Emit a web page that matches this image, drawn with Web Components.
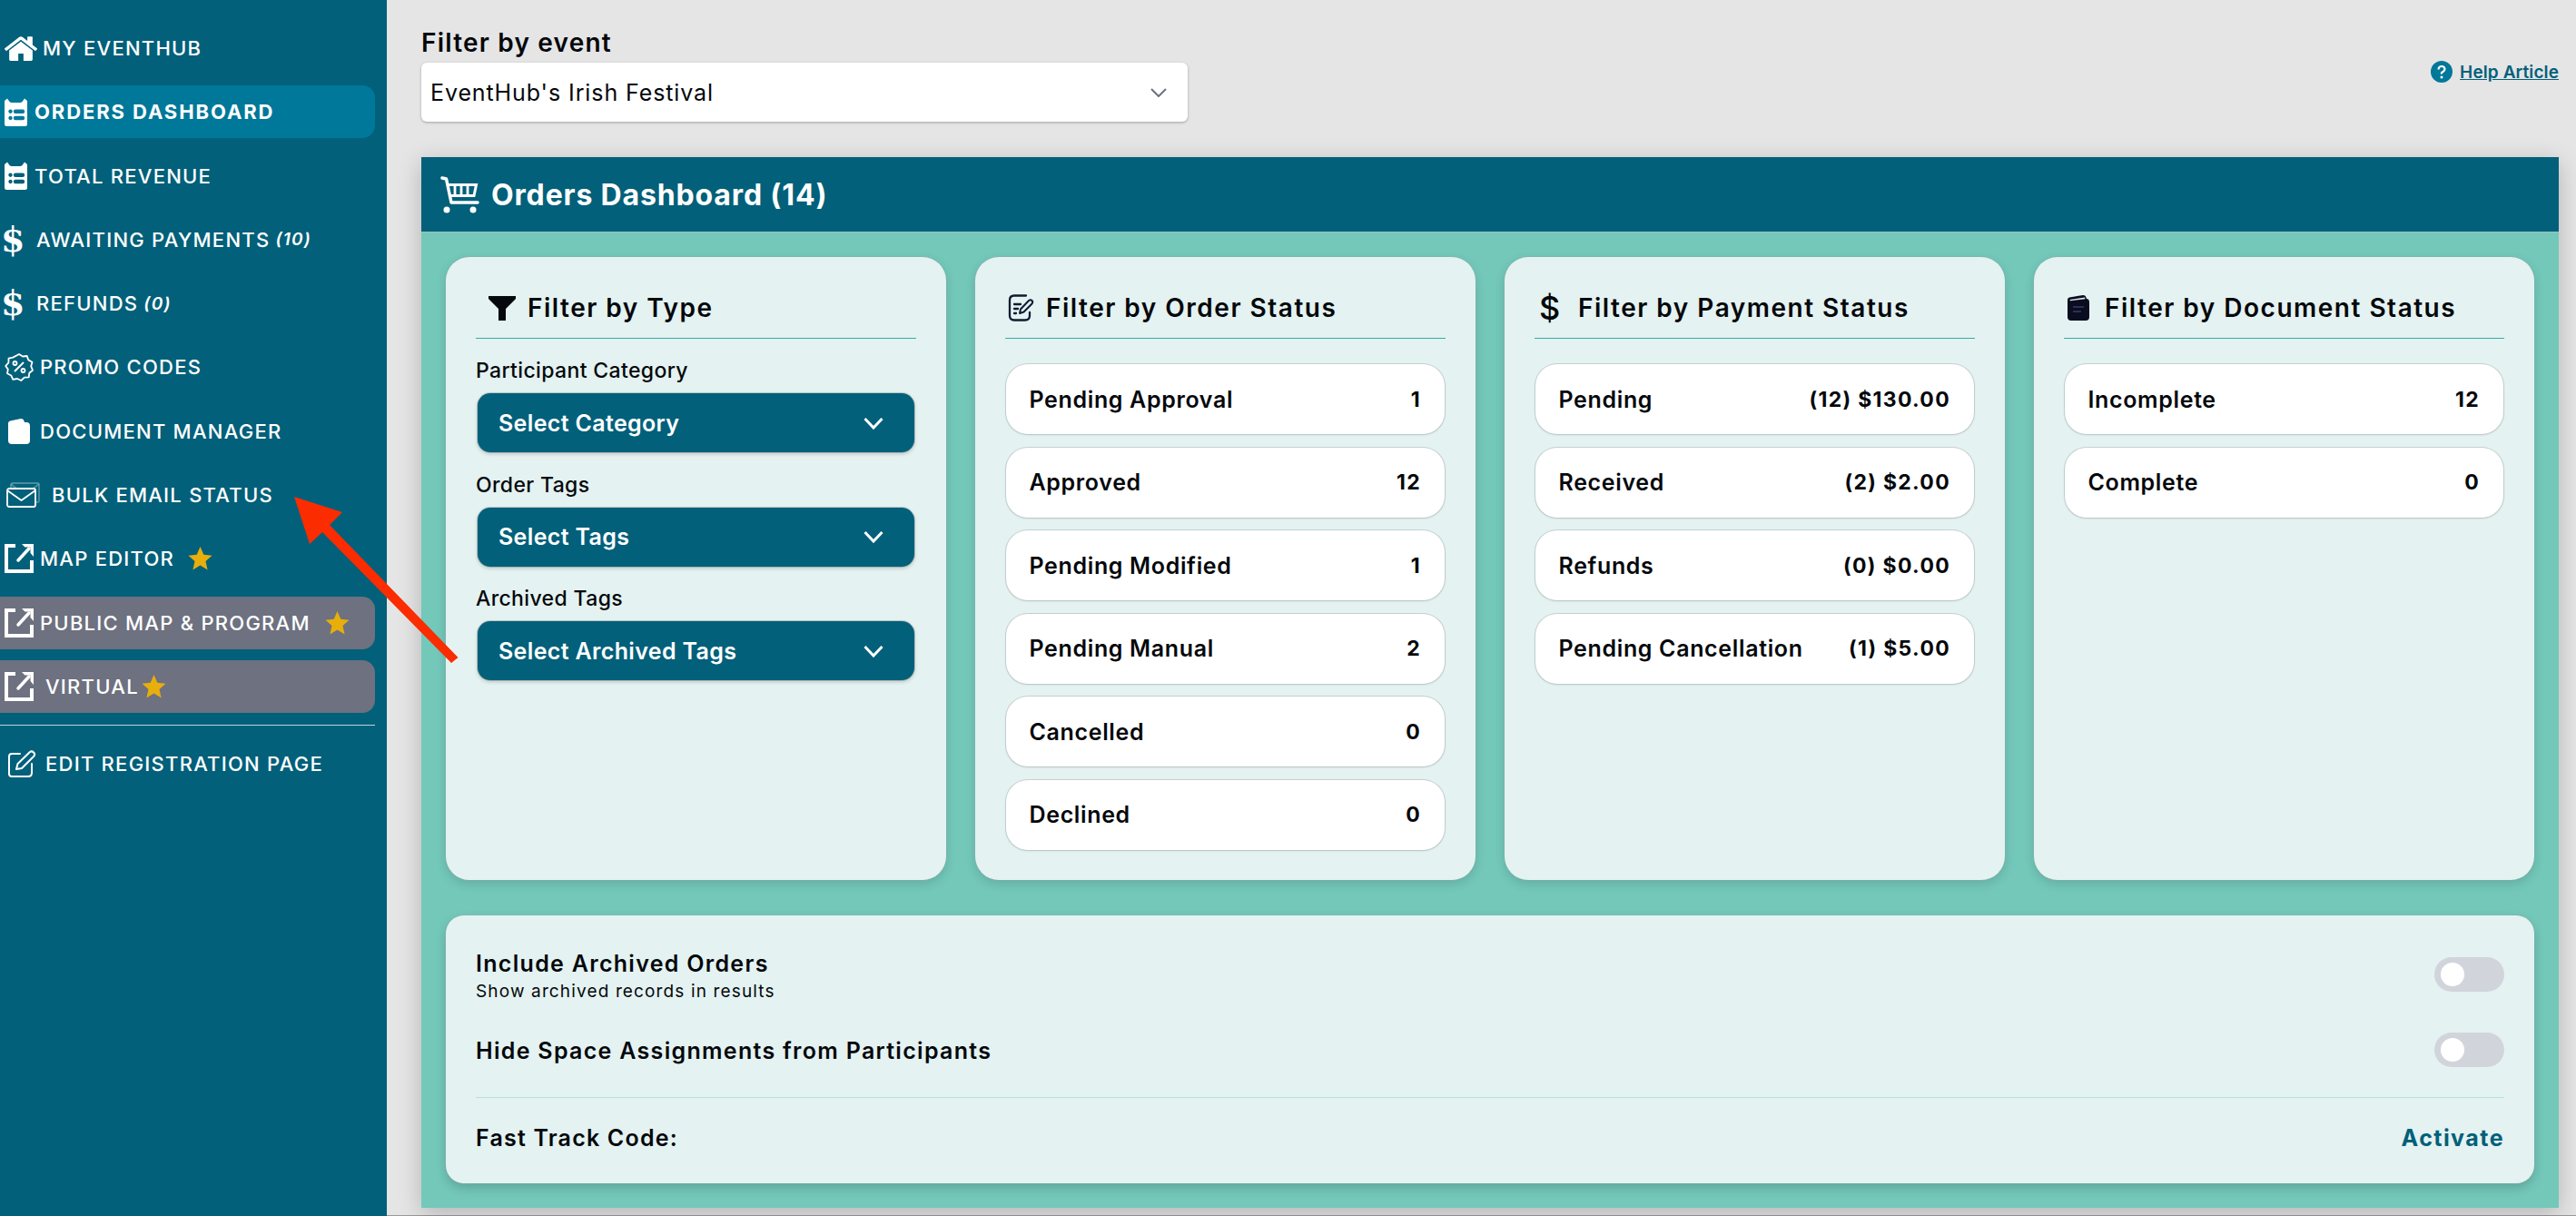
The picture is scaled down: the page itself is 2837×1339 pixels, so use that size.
<!DOCTYPE html>
<html>
<head>
<meta charset="utf-8">
<title>Orders Dashboard</title>
<style>
    html, body { margin: 0; height: 100%; overflow: hidden; }
    body { font-family: 'Inter', 'Liberation Sans', sans-serif; color: #05080c; background: #e5e5e5; }
</style>
</head>
<body>

<app-shell>
    <side-nav slot="nav">
        <nav-item icon="home" icon-x="5" text-x="47">MY EVENTHUB</nav-item>
        <nav-item icon="orders" icon-x="5" text-x="38" state="active">ORDERS DASHBOARD</nav-item>
        <nav-item icon="orders" icon-x="5" text-x="38">TOTAL REVENUE</nav-item>
        <nav-item icon="dollar" icon-x="1" text-x="40">AWAITING PAYMENTS <em>&nbsp;(10)</em></nav-item>
        <nav-item icon="dollar" icon-x="1" text-x="40">REFUNDS <em>&nbsp;(0)</em></nav-item>
        <nav-item icon="promo" icon-x="5" text-x="44">PROMO CODES</nav-item>
        <nav-item icon="book" icon-x="9" text-x="44">DOCUMENT MANAGER</nav-item>
        <nav-item icon="mail" icon-x="7" text-x="57">BULK EMAIL STATUS</nav-item>
        <nav-item icon="external" icon-x="5" text-x="44" star="15">MAP EDITOR</nav-item>
        <nav-item icon="external" icon-x="5" text-x="44" star="16" state="muted">PUBLIC MAP &amp; PROGRAM</nav-item>
        <nav-item icon="external" icon-x="5" text-x="50" star="3" state="muted">VIRTUAL</nav-item>
        <nav-item icon="edit" icon-x="9" text-x="50" divided>EDIT REGISTRATION PAGE</nav-item>
    </side-nav>

    <event-filter label="Filter by event" value="EventHub's Irish Festival"></event-filter>
    <help-link slot="help">Help Article</help-link>

    <orders-panel heading="Orders Dashboard (14)">
        <filter-card heading="Filter by Type" icon="funnel" icon-x="14" text-x="57" top="21" gap="21.5">
            <tag-select label="Participant Category" value="Select Category"></tag-select>
            <tag-select label="Order Tags" value="Select Tags"></tag-select>
            <tag-select label="Archived Tags" value="Select Archived Tags"></tag-select>
        </filter-card>
        <filter-card heading="Filter by Order Status" icon="note" icon-x="3" text-x="45">
            <status-row value="1">Pending Approval</status-row>
            <status-row value="12">Approved</status-row>
            <status-row value="1">Pending Modified</status-row>
            <status-row value="2">Pending Manual</status-row>
            <status-row value="0">Cancelled</status-row>
            <status-row value="0">Declined</status-row>
        </filter-card>
        <filter-card heading="Filter by Payment Status" icon="dollar" icon-x="5" text-x="48">
            <status-row value="(12) $130.00">Pending</status-row>
            <status-row value="(2) $2.00">Received</status-row>
            <status-row value="(0) $0.00">Refunds</status-row>
            <status-row value="(1) $5.00">Pending Cancellation</status-row>
        </filter-card>
        <filter-card heading="Filter by Document Status" icon="darkbook" icon-x="4" text-x="45">
            <status-row value="12">Incomplete</status-row>
            <status-row value="0">Complete</status-row>
        </filter-card>

        <settings-card slot="footer">
            <toggle-row hint="Show archived records in results">Include Archived Orders</toggle-row>
            <toggle-row>Hide Space Assignments from Participants</toggle-row>
            <span slot="code">Fast Track Code:</span>
            <span slot="action">Activate</span>
        </settings-card>
    </orders-panel>

    <red-arrow slot="overlay"></red-arrow>
</app-shell>

<script>
const ICONS = {
    home: `<svg width="36" height="28" viewBox="90 190 1612 1350" preserveAspectRatio="none" fill="#fff"><path d="M1472 992v480q0 26-19 45t-45 19h-384v-384h-256v384h-384q-26 0-45-19t-19-45v-480q0-1 .5-3t.5-3l575-474 575 474q1 2 1 6zm223-69l-62 74q-8 9-21 11h-3q-13 0-21-7l-692-577-692 577q-12 8-24 7-13-2-21-11l-62-74q-8-10-7-23.500t11-21.500l719-599q32-26 76-26t76 26l244 204v-195q0-14 9-23t23-9h192q14 0 23 9t9 23v408l219 182q10 8 11 21.500t-7 23.500z"/></svg>`,
    orders: `<svg width="25" height="31" viewBox="0 0 25 31"><path fill="#fff" fill-rule="evenodd" d="M0 3 L3 0.500 L5.500 4 Q6.500 5 8 5 H17 Q18.500 5 19.500 4 L22 0.500 L25 3 V28.500 Q25 31 22.500 31 H2.500 Q0 31 0 28.500 Z M6.500 12.500 a2.200 2.200 0 1 0 .01 0 Z M6.500 19.800 a2.200 2.200 0 1 0 .01 0 Z M12 12.500 a2 2 0 0 0 0 4.400 H20 a2 2 0 0 0 0 -4.400 Z M12 19.800 a2 2 0 0 0 0 4.400 H20 a2 2 0 0 0 0 -4.400 Z"/></svg>`,
    dollar: `<span class="glyph">$</span>`,
    promo: `<svg width="32" height="32" viewBox="0 0 32 32" fill="none" stroke="#fff" stroke-width="1.800" stroke-linejoin="round"><path d="M16 2l4 2.500 4.700-.5 1.600 4.400 4.200 2.300-1.300 4.600 1.800 4.400-3.700 3-.6 4.700-4.800.3L18.300 31 14 29l-4.700.8-2-4.300-4.300-2.200.8-4.700L1.200 15l3.200-3.600.1-4.800 4.700-1z"/><path d="M11 21L21 11" stroke-width="2"/><circle cx="11.500" cy="12" r="2"/><circle cx="20.500" cy="20" r="2"/></svg>`,
    book: `<svg width="24" height="28" viewBox="0 0 24 28"><path fill="#fff" d="M0 5 Q0 3 2 2.500 L14 0 Q17 -.3 17.500 2.500 L18 4 H20 Q24 4 24 8 V24 Q24 28 20 28 H4 Q0 28 0 24 Z"/></svg>`,
    mail: `<svg width="37" height="28" viewBox="0 0 37 28" fill="none"><g stroke="#fff" stroke-opacity=".28" stroke-width="1.800"><rect x="5" y="1" width="31" height="21" rx="2"/><path d="M5 2l15 12 16-12"/></g><g stroke="#fff" stroke-width="1.800" stroke-linejoin="round"><rect x="1" y="7" width="31" height="20" rx="2" fill="#02607a"/><path d="M1 9l15.500 11L32 9"/></g></svg>`,
    external: `<svg width="32" height="32" viewBox="0 0 32 32" fill="none" stroke="#fff"><path stroke-width="4" d="M12 2H2V30H30V18"/><path stroke-width="3.500" stroke-linecap="round" d="M15 18L27 5"/><path fill="#fff" stroke="none" d="M19 0H32V14L28.500 10V3.500H22.500Z"/></svg>`,
    edit: `<svg width="30" height="30" viewBox="0 0 30 30" fill="none" stroke="#fff" stroke-width="2" stroke-linejoin="round" stroke-linecap="round"><path d="M13 4H4Q1 4 1 7V26Q1 29 4 29H22Q26 29 26 25V15"/><path d="M9 21l1.500-6L24 2q2-1.500 4 .5t.5 4L15 20z"/></svg>`,
    funnel: `<svg width="30" height="27" viewBox="0 0 30 27" fill="#05080c"><path d="M0 0H30V3L19 14V27H11V14L0 3Z"/></svg>`,
    note: `<svg width="28" height="30" viewBox="0 0 28 30" fill="none" stroke="#101a33" stroke-width="2.300" stroke-linecap="round" stroke-linejoin="round"><path d="M20 1.500H7Q2 1.500 2 6.500V23.500Q2 28.500 7 28.500H19Q24 28.500 24 23.500V20"/><path d="M7 11H14M7 16H11M7 21H9"/><path d="M13 21l1-4.500 9-9.500q2-1.500 3.500 0t0 3.500l-9 9z" stroke-width="2"/></svg>`,
    darkbook: `<svg width="24" height="28" viewBox="0 0 24 28"><path fill="#0a0d1f" d="M0 5 Q0 3 2 2.500 L17 0 Q20 -.3 20.500 2.500 L21 4 Q24 4 24 8 V24 Q24 28 20 28 H4 Q0 28 0 24 Z"/><path fill="#dfe4f2" d="M2.500 5 L19 2.600 L19.500 4.200 L3 6.300Z"/><path stroke="#2a2f55" stroke-width="1.800" d="M6 13H18M6 18H15"/></svg>`
};

class AppShell extends HTMLElement {
    constructor() {
        super();
        this.shadow = this.attachShadow({ mode: 'open' });
    }

    connectedCallback() {
        this.shadow.innerHTML = `
        <style>
            :host{
                display: flex;
                height: 100vh;
                overflow: hidden;
                position: relative;
            }
            main{
                border-bottom: 1px solid #9a9a9a;
                box-sizing: border-box;
                flex: 1;
                min-width: 0;
                padding: 31px 19px 0 38px;
            }
            .top{
                align-items: flex-start;
                display: flex;
                justify-content: space-between;
                margin-bottom: 39px;
            }
        </style>
        <slot name="nav"></slot>
        <main>
            <div class="top">
                <slot></slot>
                <slot name="help"></slot>
            </div>
            <slot name="panel"></slot>
        </main>
        <slot name="overlay"></slot>`;
        // the panel is moved to its own slot so the default slot only holds the event filter
        let panel = this.querySelector('orders-panel');
        panel.setAttribute('slot', 'panel');
    }
}

class SideNav extends HTMLElement {
    constructor() {
        super();
        this.shadow = this.attachShadow({ mode: 'open' });
    }

    connectedCallback() {
        this.shadow.innerHTML = `
        <style>
            :host{
                background: #02607a;
                box-sizing: border-box;
                display: flex;
                flex: 0 0 426px;
                flex-direction: column;
                gap: 12.3px;
                height: 100%;
                overflow: hidden;
                padding: 24px 13px 0 0;
            }
        </style>
        <slot></slot>`;
    }
}

class NavItem extends HTMLElement {
    constructor() {
        super();
        this.shadow = this.attachShadow({ mode: 'open' });
    }

    connectedCallback() {
        let iconX = Number(this.getAttribute('icon-x'));
        let textX = Number(this.getAttribute('text-x'));
        let state = this.getAttribute('state');
        let star = this.getAttribute('star');
        let background = state == 'active' ? '#007899' : state == 'muted' ? '#6d7180' : 'transparent';
        let weight = state == 'active' ? 700 : 500;
        let spacing = state == 'active' ? 1.9 : 1.25;

        this.shadow.innerHTML = `
        <style>
            :host{
                display: block;
                margin-left: -14px;
            }
            :host([divided]){
                border-top: 1px solid #b9d6de;
                margin-left: 0;
                margin-top: 0.5px;
                padding-top: 13px;
            }
            .item{
                align-items: center;
                background: ${background};
                border-radius: 14px;
                color: #fff;
                display: flex;
                font-size: 22px;
                font-weight: ${weight};
                height: 58px;
                letter-spacing: ${spacing}px;
                padding-left: ${this.hasAttribute('divided') ? 0 : 14}px;
                white-space: nowrap;
            }
            .icon{
                align-items: center;
                box-sizing: border-box;
                display: flex;
                flex: 0 0 ${textX}px;
                padding-left: ${iconX}px;
            }
            .glyph{
                font-family: 'DejaVu Serif', serif;
                font-size: 38px;
                font-weight: 700;
                letter-spacing: 0;
                line-height: 1;
            }
            ::slotted(em){
                font-size: 19px;
                font-weight: 600;
            }
            svg{ display: block; overflow: visible; }
            .star{ margin-left: ${star}px; }
        </style>
        <div class="item">
            <span class="icon">${ICONS[this.getAttribute('icon')]}</span>
            <slot></slot>
            ${star ? `<svg class="star" width="27" height="26" viewBox="0 0 27 26"><path fill="#e8ae0c" d="M13.500 0l3.800 8.800 9.200.9-7 6.200 2.100 9.600-8.100-5.100-8.100 5.100 2.100-9.600-7-6.200 9.200-.9z"/></svg>` : ''}
        </div>`;
    }
}

class EventFilter extends HTMLElement {
    constructor() {
        super();
        this.shadow = this.attachShadow({ mode: 'open' });
    }

    connectedCallback() {
        this.shadow.innerHTML = `
        <style>
            :host{ display: block; width: 844px; }
            label{
                display: block;
                font-size: 28px;
                font-weight: 600;
                letter-spacing: 1.2px;
                line-height: 32px;
                margin-bottom: 6px;
            }
            .box{
                align-items: center;
                background: #fff;
                border-radius: 6px;
                box-shadow: 0 1px 3px rgba(0,0,0,.3);
                box-sizing: border-box;
                display: flex;
                font-size: 25px;
                height: 65px;
                justify-content: space-between;
                letter-spacing: 0.9px;
                padding: 0 23px 0 10px;
            }
        </style>
        <label>${this.getAttribute('label')}</label>
        <div class="box">
            <span>${this.getAttribute('value')}</span>
            <svg width="18" height="10" viewBox="0 0 18 10" fill="none" stroke="#6b7280" stroke-width="2"><path d="M1 1l8 8 8-8"/></svg>
        </div>`;
    }
}

class HelpLink extends HTMLElement {
    constructor() {
        super();
        this.shadow = this.attachShadow({ mode: 'open' });
    }

    connectedCallback() {
        this.shadow.innerHTML = `
        <style>
            :host{
                align-items: center;
                color: #02607a;
                display: flex;
                font-size: 19px;
                font-weight: 600;
                gap: 8px;
                margin-top: 36px;
            }
            a{ color: inherit; letter-spacing: 0.1px; text-decoration: underline; }
            svg{ display: block; }
        </style>
        <svg width="24" height="24" viewBox="0 0 24 24">
            <circle cx="12" cy="12" r="12" fill="#007899"/>
            <path d="M8.500 9.500Q8.800 6 12 6t3.500 3q0 2-2 3t-1.500 2.500" fill="none" stroke="#fff" stroke-width="2.200"/>
            <circle cx="12" cy="18" r="1.500" fill="#fff"/>
        </svg>
        <a><slot></slot></a>`;
    }
}

class OrdersPanel extends HTMLElement {
    constructor() {
        super();
        this.shadow = this.attachShadow({ mode: 'open' });
    }

    connectedCallback() {
        this.shadow.innerHTML = `
        <style>
            :host{
                box-shadow: 0 6px 24px rgba(0,0,0,.22);
                display: block;
            }
            header{
                align-items: center;
                background: #02607a;
                border-bottom: 1px solid #9cc3c4;
                box-sizing: border-box;
                color: #fff;
                display: flex;
                font-size: 32px;
                font-weight: 700;
                gap: 13px;
                height: 83px;
                letter-spacing: 0.85px;
                padding-left: 21px;
            }
            .body{
                background: #73c8ba;
                box-sizing: border-box;
                height: 1074px;
                padding: 27px 27px 0 27px;
            }
            .cards{
                display: grid;
                gap: 32px;
                grid-template-columns: repeat(4, 1fr);
                height: 686px;
                margin-bottom: 39px;
            }
            svg{ display: block; }
        </style>
        <header>
            <svg width="43" height="41" viewBox="0 0 43 41" fill="none" stroke="#fff">
                <path stroke-width="3.500" stroke-linecap="round" stroke-linejoin="round" d="M2 2L6.500 3L12 29H41"/>
                <path stroke-width="3" d="M7 9.500H39.500L37 21.500H10"/>
                <path stroke-width="2.800" d="M16 9.500V21M23 9.500V21M30 9.500V21"/>
                <circle cx="7" cy="37" r="3.500" fill="#fff" stroke="none"/>
                <circle cx="36" cy="37" r="3.500" fill="#fff" stroke="none"/>
            </svg>
            <span>${this.getAttribute('heading')}</span>
        </header>
        <div class="body">
            <div class="cards"><slot></slot></div>
            <slot name="footer"></slot>
        </div>`;
    }
}

class FilterCard extends HTMLElement {
    constructor() {
        super();
        this.shadow = this.attachShadow({ mode: 'open' });
    }

    connectedCallback() {
        let iconX = this.getAttribute('icon-x');
        let textX = this.getAttribute('text-x');
        let top = this.getAttribute('top') || 28;
        let gap = this.getAttribute('gap') || 14.5;

        this.shadow.innerHTML = `
        <style>
            :host{
                background: #e4f2f1;
                border-radius: 26px;
                box-shadow: 0 0 0 1px rgba(150,170,170,.35), 0 4px 12px rgba(0,0,0,.14);
                box-sizing: border-box;
                display: block;
                min-width: 0;
                padding: 33px;
            }
            h2{
                align-items: center;
                border-bottom: 1px solid #2fb0a5;
                display: flex;
                font-size: 28px;
                font-weight: 600;
                height: 46px;
                letter-spacing: 1.5px;
                line-height: 46px;
                margin: 0;
                padding-bottom: 10px;
                white-space: nowrap;
            }
            .icon{
                align-items: center;
                box-sizing: border-box;
                display: flex;
                flex: 0 0 ${textX}px;
                padding-left: ${iconX}px;
            }
            .glyph{ font-size: 36px; font-weight: 500; letter-spacing: 0; line-height: 1; }
            svg{ display: block; overflow: visible; }
            .rows{
                display: flex;
                flex-direction: column;
                gap: ${gap}px;
                margin-top: ${top}px;
            }
        </style>
        <h2><span class="icon">${ICONS[this.getAttribute('icon')]}</span>${this.getAttribute('heading')}</h2>
        <div class="rows"><slot></slot></div>`;
    }
}

class TagSelect extends HTMLElement {
    constructor() {
        super();
        this.shadow = this.attachShadow({ mode: 'open' });
    }

    connectedCallback() {
        this.shadow.innerHTML = `
        <style>
            :host{ display: block; }
            label{
                display: block;
                font-size: 23px;
                font-weight: 500;
                letter-spacing: 0.36px;
                line-height: 28px;
                margin-bottom: 11px;
            }
            .box{
                align-items: center;
                background: #02607a;
                border-radius: 14px;
                box-shadow: 0 0 0 1px rgba(120,130,130,.35), 0 2px 4px rgba(0,0,0,.18);
                box-sizing: border-box;
                color: #fff;
                display: flex;
                font-size: 25px;
                font-weight: 600;
                height: 65px;
                justify-content: space-between;
                letter-spacing: 0.35px;
                margin: 0 2px;
                padding: 0 34px 0 23px;
            }
            svg{ display: block; }
        </style>
        <label>${this.getAttribute('label')}</label>
        <div class="box">
            <span>${this.getAttribute('value')}</span>
            <svg width="22" height="14" viewBox="0 0 22 14" fill="none" stroke="#fff" stroke-width="3"><path d="M1.500 2L11 12 20.500 2"/></svg>
        </div>`;
    }
}

class StatusRow extends HTMLElement {
    constructor() {
        super();
        this.shadow = this.attachShadow({ mode: 'open' });
    }

    connectedCallback() {
        this.shadow.innerHTML = `
        <style>
            :host{
                align-items: center;
                background: #fff;
                border-radius: 24px;
                box-shadow: 0 0 0 1px rgba(150,160,160,.38), 0 1px 3px rgba(0,0,0,.1);
                box-sizing: border-box;
                display: flex;
                font-size: 25px;
                font-weight: 600;
                height: 77px;
                justify-content: space-between;
                letter-spacing: 0.65px;
                margin: 0 1px;
                padding: 0 26px 0 25.5px;
                white-space: nowrap;
            }
            .value{
                font-size: 23px;
                font-weight: 700;
                letter-spacing: 1.3px;
            }
        </style>
        <span><slot></slot></span>
        <span class="value">${this.getAttribute('value')}</span>`;
    }
}

class SettingsCard extends HTMLElement {
    constructor() {
        super();
        this.shadow = this.attachShadow({ mode: 'open' });
    }

    connectedCallback() {
        this.shadow.innerHTML = `
        <style>
            :host{
                background: #e4f2f1;
                border-radius: 20px;
                box-shadow: 0 0 0 1px rgba(150,170,170,.35), 0 5px 12px rgba(0,0,0,.18);
                box-sizing: border-box;
                display: block;
                height: 295px;
                padding: 38px 33px 0;
            }
            .toggles{
                display: flex;
                flex-direction: column;
                gap: 35px;
            }
            .code{
                align-items: center;
                border-top: 1px solid #b5e0d8;
                display: flex;
                font-size: 25px;
                font-weight: 600;
                height: 30px;
                justify-content: space-between;
                letter-spacing: 1.2px;
                margin-top: 32px;
                padding-top: 29px;
            }
            .action{
                color: #02607a;
                font-weight: 700;
                letter-spacing: 1.45px;
            }
        </style>
        <div class="toggles"><slot></slot></div>
        <div class="code">
            <slot name="code"></slot>
            <span class="action"><slot name="action"></slot></span>
        </div>`;
    }
}

class ToggleRow extends HTMLElement {
    constructor() {
        super();
        this.shadow = this.attachShadow({ mode: 'open' });
    }

    connectedCallback() {
        let hint = this.getAttribute('hint');
        this.shadow.innerHTML = `
        <style>
            :host{
                align-items: center;
                display: flex;
                justify-content: space-between;
            }
            .title{
                font-size: 25px;
                font-weight: 600;
                letter-spacing: 1.3px;
                line-height: 30px;
            }
            .hint{
                font-size: 19px;
                letter-spacing: 1.14px;
                line-height: 22px;
                margin-top: 5px;
            }
            .switch{
                background: #d1d5db;
                border-radius: 19px;
                box-sizing: border-box;
                flex: 0 0 77px;
                height: 38px;
                margin: -1.5px 0 1.5px;
                padding: 6px 7px;
            }
            .knob{
                background: #fff;
                border-radius: 50%;
                height: 26px;
                width: 26px;
            }
        </style>
        <div>
            <div class="title"><slot></slot></div>
            ${hint ? `<div class="hint">${hint}</div>` : ''}
        </div>
        <div class="switch"><div class="knob"></div></div>`;
    }
}

class RedArrow extends HTMLElement {
    constructor() {
        super();
        this.shadow = this.attachShadow({ mode: 'open' });
    }

    connectedCallback() {
        this.shadow.innerHTML = `
        <style>
            :host{
                left: 0;
                pointer-events: none;
                position: absolute;
                top: 0;
            }
            svg{ display: block; }
        </style>
        <svg width="520" height="740" viewBox="0 0 520 740">
            <path fill="#fb2c00" d="M324 547L377 564L363 578L504.500 724L497 730L355 586L341 599Z"/>
        </svg>`;
    }
}

customElements.define('app-shell', AppShell);
customElements.define('side-nav', SideNav);
customElements.define('nav-item', NavItem);
customElements.define('event-filter', EventFilter);
customElements.define('help-link', HelpLink);
customElements.define('orders-panel', OrdersPanel);
customElements.define('filter-card', FilterCard);
customElements.define('tag-select', TagSelect);
customElements.define('status-row', StatusRow);
customElements.define('settings-card', SettingsCard);
customElements.define('toggle-row', ToggleRow);
customElements.define('red-arrow', RedArrow);
</script>
</body>
</html>
